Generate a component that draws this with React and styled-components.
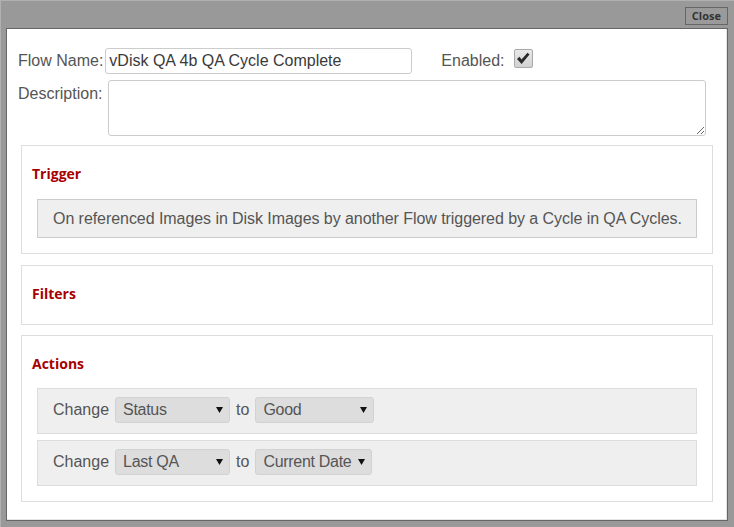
import React from 'react';
import styled, { createGlobalStyle } from 'styled-components';

const GlobalStyle = createGlobalStyle`
    body {
        margin: 0;
        font-family: "Liberation Sans", Arial, sans-serif;
    }
`;

const Window = styled.div`
    width: 734px;
    height: 527px;
    box-sizing: border-box;
    background-color: #999;
    border-top: 1px solid #b0b0b0;
    border-left: 1px solid #b0b0b0;
    display: flex;
    flex-direction: column;
`;

const TitleBar = styled.div`
    height: 27px;
    display: flex;
    justify-content: flex-end;
    align-items: flex-start;
    padding: 6px 6px 0 0;
    box-sizing: border-box;
`;

const CloseButton = styled.button`
    height: 18px;
    padding: 0 6px;
    background-color: #9a9a9a;
    border: 1px solid #666;
    color: #333;
    font-family: "Open Sans", sans-serif;
    font-weight: 700;
    font-size: 11px;
    line-height: 14px;
    cursor: pointer;
`;

const Panel = styled.div`
    flex: 1;
    margin: 0 6px 6px 5px;
    background: white;
    border: 1px solid #666;
    box-shadow: inset -1px -1px 0 #e4e4e4;
    padding: 19px 14px 0 14px;
    display: flex;
    flex-direction: column;
`;

const FieldRow = styled.div`
    display: flex;
    align-items: ${(p) => (p.$top ? 'flex-start' : 'center')};
    margin-left: -3px;
    margin-bottom: 6px;
`;

const Label = styled.label`
    font-size: 16px;
    color: #555;
    margin-top: ${(p) => p.$offset || 0}px;
`;

const TextInput = styled.input`
    width: 307px;
    height: 26px;
    box-sizing: border-box;
    margin-left: 2px;
    padding: 0 3px;
    border: 1px solid #ccc;
    border-radius: 3px;
    font-family: "Liberation Sans", Arial, sans-serif;
    font-size: 16px;
    color: #3a3a3a;
    outline: none;
`;

const EnabledLabel = styled(Label)`
    margin-left: 29px;
`;

const CheckBox = styled.span`
    width: 19px;
    height: 19px;
    margin-left: 9px;
    margin-top: -5px;
    box-sizing: border-box;
    border: 1px solid #aaa;
    border-radius: 2px;
    background: linear-gradient(#e8e8e8, #d2d2d2);
    display: flex;
    align-items: center;
    justify-content: center;
`;

const TextArea = styled.textarea`
    width: 598px;
    height: 56px;
    box-sizing: border-box;
    margin-left: 6px;
    border: 1px solid #ccc;
    border-radius: 3px;
    font-family: "Liberation Sans", Arial, sans-serif;
    font-size: 14px;
    outline: none;
`;

const Section = styled.div`
    border: 1px solid #ddd;
    padding: 19px 15px 15px;
    margin-top: ${(p) => p.$gap}px;
`;

const Heading = styled.h3`
    margin: 0 0 6px -5px;
    font-family: "Open Sans", sans-serif;
    font-weight: 700;
    font-size: 14px;
    line-height: 18px;
    color: #a80000;
`;

const Body = styled.div`
    margin-top: ${(p) => p.$gap || 16}px;
    display: flex;
    flex-direction: column;
    gap: 6px;
`;

const TriggerBox = styled.div`
    background-color: #efefef;
    border: 1px solid #ccc;
    padding: 10px 15px 9px;
    font-size: 16px;
    letter-spacing: -0.06px;
    line-height: 18px;
    color: #555;
    white-space: nowrap;
`;

const ActionRow = styled.div`
    background-color: #efefef;
    border: 1px solid #ddd;
    padding: 8px 15px 10px;
    display: flex;
    align-items: center;
    gap: 6px;
    font-size: 16px;
    color: #555;
`;

const Select = styled.div`
    width: ${(p) => p.$width}px;
    height: 26px;
    box-sizing: border-box;
    padding: 0 6px 0 7px;
    background-color: #ddd;
    border: 1px solid #d2d2d2;
    border-radius: 3px;
    display: flex;
    align-items: center;
    justify-content: space-between;
    font-size: 16px;
    letter-spacing: -0.3px;
    color: #555;
    white-space: nowrap;
`;

const Arrow = () => (
    <svg width="7" height="6" viewBox="0 0 7 6">
        <path d="M0 0 L7 0 L3.5 6 Z" fill="#111" />
    </svg>
);

const Check = () => (
    <svg width="14" height="13" viewBox="0 0 14 13">
        <path d="M1 7 L3.5 4.8 L5.5 7.5 L11.5 0.8 L13.5 2.5 L5.6 12 Z" fill="#2a2a2a" />
    </svg>
);

const actions = [
    { field: 'Status', value: 'Good', valueWidth: 119 },
    { field: 'Last QA', value: 'Current Date', valueWidth: 117 },
];

const App = () => {
    return (
        <>
            <GlobalStyle />
            <Window>
                <TitleBar>
                    <CloseButton>Close</CloseButton>
                </TitleBar>
                <Panel>
                    <FieldRow>
                        <Label>Flow Name:</Label>
                        <TextInput defaultValue="vDisk QA 4b QA Cycle Complete" />
                        <EnabledLabel>Enabled:</EnabledLabel>
                        <CheckBox>
                            <Check />
                        </CheckBox>
                    </FieldRow>
                    <FieldRow $top>
                        <Label $offset={5}>Description:</Label>
                        <TextArea />
                    </FieldRow>
                    <Section $gap={3}>
                        <Heading>Trigger</Heading>
                        <Body>
                            <TriggerBox>
                                On referenced Images in Disk Images by another Flow triggered by a Cycle in QA Cycles.
                            </TriggerBox>
                        </Body>
                    </Section>
                    <Section $gap={11}>
                        <Heading>Filters</Heading>
                    </Section>
                    <Section $gap={10}>
                        <Heading>Actions</Heading>
                        <Body $gap={15}>
                            {actions.map((a) => (
                                <ActionRow key={a.field}>
                                    Change
                                    <Select $width={115}>
                                        {a.field}
                                        <Arrow />
                                    </Select>
                                    to
                                    <Select $width={a.valueWidth}>
                                        {a.value}
                                        <Arrow />
                                    </Select>
                                </ActionRow>
                            ))}
                        </Body>
                    </Section>
                </Panel>
            </Window>
        </>
    );
};

export default App;
